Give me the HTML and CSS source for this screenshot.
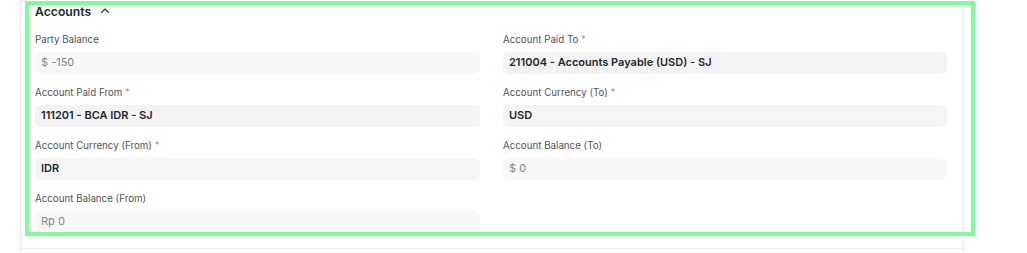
FILE: index.html
```html
<!DOCTYPE html>
<html>
<head>
<meta charset="utf-8">
<link rel="stylesheet" href="styles.css">
</head>
<body>
<div class="page">
  <div class="card">
    <section class="section">
      <div class="section-head">
        <span class="section-title">Accounts</span>
        <svg class="chevron" width="12" height="12" viewBox="0 0 12 12"><path d="M2.5 7.5 L6 4 L9.5 7.5" fill="none" stroke="#333" stroke-width="1.1" stroke-linecap="round" stroke-linejoin="round"/></svg>
      </div>
      <div class="grid">
        <div class="col">
          <div class="field">
            <div class="label">Party Balance</div>
            <div class="control readonly">$ -150</div>
          </div>
          <div class="field">
            <div class="label">Account Paid From <span class="req">*</span></div>
            <div class="control link">111201 - BCA IDR - SJ</div>
          </div>
          <div class="field">
            <div class="label">Account Currency (From) <span class="req">*</span></div>
            <div class="control link soft">IDR</div>
          </div>
          <div class="field">
            <div class="label">Account Balance (From)</div>
            <div class="control readonly">Rp 0</div>
          </div>
        </div>
        <div class="col">
          <div class="field">
            <div class="label">Account Paid To <span class="req">*</span></div>
            <div class="control link">211004 - Accounts Payable (USD) - SJ</div>
          </div>
          <div class="field">
            <div class="label">Account Currency (To) <span class="req">*</span></div>
            <div class="control link soft">USD</div>
          </div>
          <div class="field">
            <div class="label">Account Balance (To)</div>
            <div class="control readonly">$ 0</div>
          </div>
        </div>
      </div>
    </section>
  </div>
  <div class="highlight"></div>
</div>
</body>
</html>
```
FILE: styles.css
```css
html, body {
  margin: 0;
  padding: 0;
  background: #ffffff;
}
body {
  font-family: Inter, "Noto Sans", sans-serif;
  color: #1f272e;
  -webkit-font-smoothing: antialiased;
}
.page {
  position: relative;
  width: 1027px;
  height: 253px;
  overflow: hidden;
}
.card {
  margin-left: 20px;
  width: 942px;
  height: 253px;
  border-left: 1px solid #ebebeb;
  border-right: 1px solid #ebebeb;
}
.section {
  padding: 0 15px 3px 14px;
  border-bottom: 1px solid #ebebeb;
}
.section-head {
  display: flex;
  align-items: center;
  height: 22px;
  margin-bottom: 11px;
}
.section-title {
  font-size: 12.2px;
  font-weight: 600;
  color: #1f272e;
}
.chevron {
  margin-left: 8px;
  margin-top: -1px;
}
.grid {
  display: grid;
  grid-template-columns: 445px 444px;
  column-gap: 23px;
}
.field {
  margin-bottom: 12px;
}
.label {
  font-size: 9.75px;
  line-height: 14px;
  color: #525252;
  margin-bottom: 5px;
}
.req {
  color: #f07e7e;
}
.control {
  height: 22px;
  line-height: 21px;
  border-radius: 6px;
  padding: 0 6px;
  font-size: 11px;
  box-sizing: border-box;
}
.control.link {
  background: #f3f3f3;
  font-weight: 600;
  color: #1f272e;
}
.control.link.soft {
  background: #f5f5f5;
}
.control.readonly {
  background: #f8f8f8;
  color: #7d8690;
}
.highlight {
  position: absolute;
  left: 25px;
  top: 1px;
  width: 942px;
  height: 227px;
  border: 4px solid #80fa9a;
  pointer-events: none;
}
```
